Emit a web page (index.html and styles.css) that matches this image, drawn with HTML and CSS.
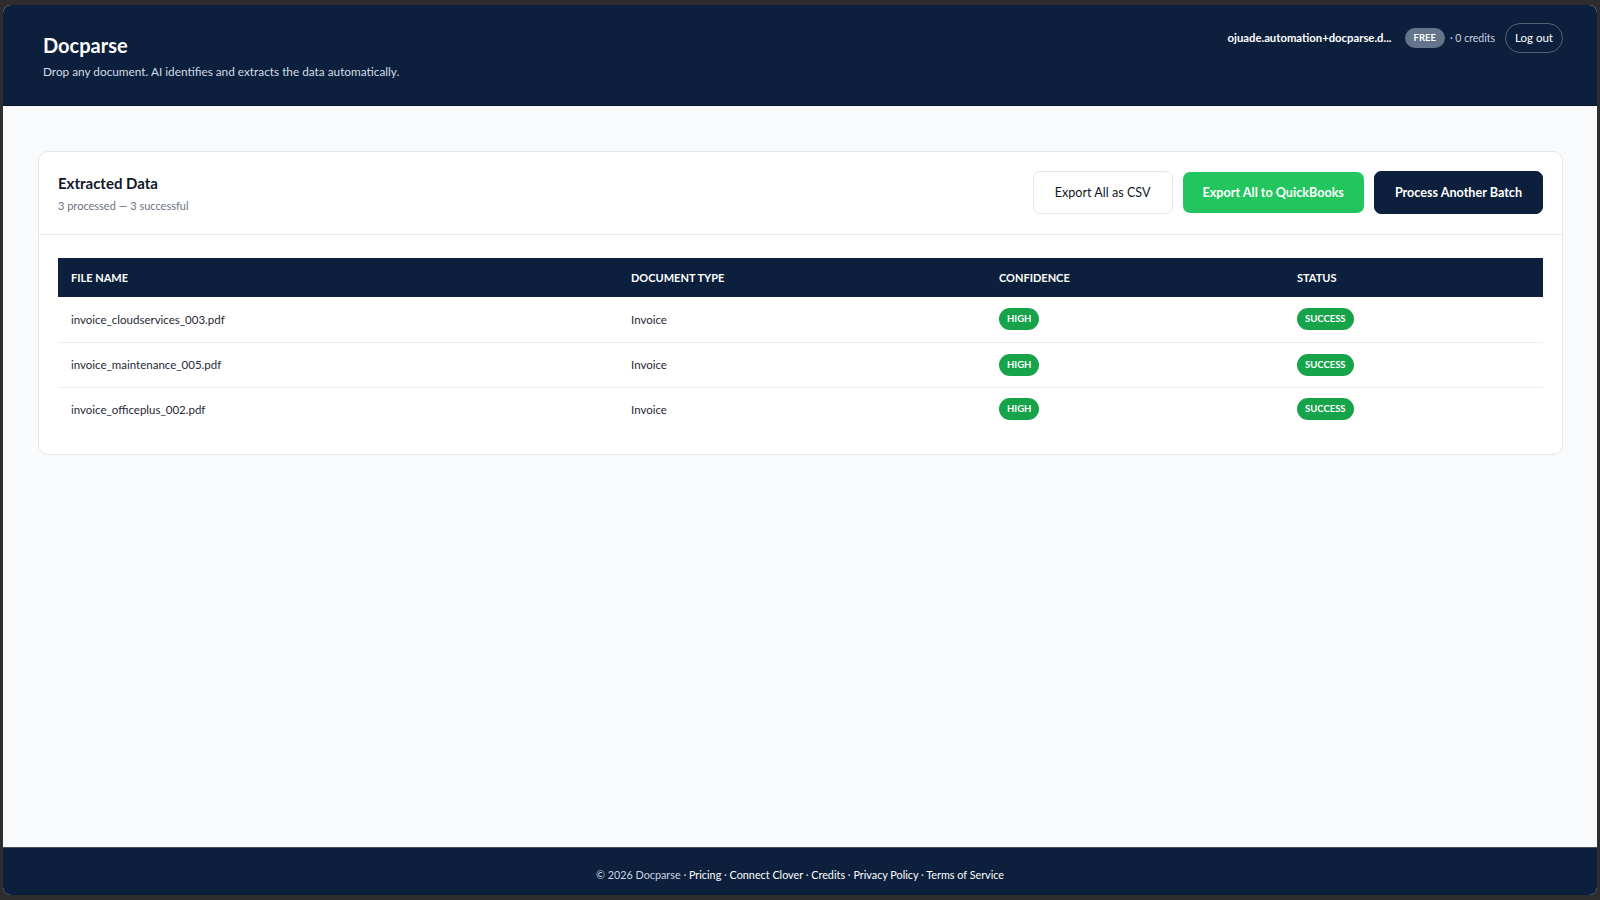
FILE: index.html
```html
<!DOCTYPE html>
<html lang="en">
<head>
<meta charset="utf-8">
<title>Docparse</title>
<link rel="stylesheet" href="styles.css">
</head>
<body>
<div class="window">
  <header class="topbar">
    <div class="brand">
      <h1 class="brand-title">Docparse</h1>
      <p class="brand-sub">Drop any document. AI identifies and extracts the data automatically.</p>
    </div>
    <div class="account">
      <span class="account-email">ojuade.automation+docparse.d...</span>
      <span class="plan-badge">FREE</span>
      <span class="credits">· 0 credits</span>
      <button class="btn-logout">Log out</button>
    </div>
  </header>

  <main class="content">
    <section class="card">
      <div class="card-head">
        <div class="card-titles">
          <h2 class="card-title">Extracted Data</h2>
          <p class="card-sub">3 processed — 3 successful</p>
        </div>
        <div class="actions">
          <button class="btn btn-outline">Export All as CSV</button>
          <button class="btn btn-green">Export All to QuickBooks</button>
          <button class="btn btn-dark">Process Another Batch</button>
        </div>
      </div>
      <div class="card-body">
        <table class="results">
          <thead>
            <tr>
              <th class="col-file">File Name</th>
              <th class="col-type">Document Type</th>
              <th class="col-conf">Confidence</th>
              <th class="col-status">Status</th>
            </tr>
          </thead>
          <tbody>
            <tr>
              <td>invoice_cloudservices_003.pdf</td>
              <td>Invoice</td>
              <td><span class="pill">HIGH</span></td>
              <td><span class="pill">SUCCESS</span></td>
            </tr>
            <tr>
              <td>invoice_maintenance_005.pdf</td>
              <td>Invoice</td>
              <td><span class="pill">HIGH</span></td>
              <td><span class="pill">SUCCESS</span></td>
            </tr>
            <tr>
              <td>invoice_officeplus_002.pdf</td>
              <td>Invoice</td>
              <td><span class="pill">HIGH</span></td>
              <td><span class="pill">SUCCESS</span></td>
            </tr>
          </tbody>
        </table>
      </div>
    </section>
  </main>

  <footer class="footer">
    <span class="footer-muted">© 2026 Docparse ·</span>
    <a href="#">Pricing</a> ·
    <a href="#">Connect Clover</a> ·
    <a href="#">Credits</a> ·
    <a href="#">Privacy Policy</a> ·
    <a href="#">Terms of Service</a>
  </footer>
</div>
</body>
</html>
```

FILE: styles.css
```css
* { box-sizing: border-box; }

html, body {
  margin: 0;
  padding: 0;
  height: 100%;
}

body {
  background: #2d2d2d;
  font-family: "Lato", "Liberation Sans", sans-serif;
  color: #0f172a;
  overflow: hidden;
}

.window {
  margin: 5px 3px 5px 3px;
  height: 890px;
  border-radius: 8px;
  overflow: hidden;
  display: flex;
  flex-direction: column;
  background: #f8fafc;
}

/* Header */
.topbar {
  height: 101px;
  flex: none;
  background: #0c1f3c;
  display: flex;
  justify-content: space-between;
  align-items: flex-start;
  padding: 18px 34px 0 40px;
  border-bottom: 1px solid #07152b;
}

.brand { margin-top: 8px; }

.brand-title {
  margin: 0;
  font-size: 20px;
  line-height: 28px;
  font-weight: 700;
  color: #ffffff;
}

.brand-sub {
  margin: 4px 0 0;
  font-size: 11.8px;
  line-height: 18px;
  color: #d5dce6;
}

.account {
  display: flex;
  align-items: center;
  height: 29px;
  color: #ffffff;
}

.account-email {
  font-size: 11.3px;
  font-weight: 700;
  margin-right: 13px;
}

.plan-badge {
  background: #64748b;
  color: #ffffff;
  font-size: 9.5px;
  font-weight: 700;
  height: 20px;
  line-height: 20px;
  padding: 0 9px;
  border-radius: 10px;
}

.credits {
  font-size: 10.5px;
  color: #cbd5e1;
  margin-left: 5px;
  margin-right: 10px;
}

.btn-logout {
  font-family: inherit;
  font-size: 11.5px;
  color: #ffffff;
  background: transparent;
  border: 1px solid rgba(255, 255, 255, 0.3);
  border-radius: 15px;
  height: 30px;
  padding: 0 9px;
  cursor: pointer;
}

/* Content */
.content {
  flex: 1;
  padding: 45px 34px 0 35px;
}

.card {
  background: #ffffff;
  border: 1px solid #e5e7eb;
  border-radius: 10px;
}

.card-head {
  display: flex;
  justify-content: space-between;
  align-items: center;
  padding: 18px 19px 20px 19px;
  border-bottom: 1px solid #e5e7eb;
}

.card-title {
  margin: 2px 0 0;
  font-size: 15px;
  line-height: 22px;
  font-weight: 700;
  color: #0f172a;
}

.card-sub {
  margin: 3px 0 0;
  font-size: 11px;
  line-height: 17px;
  color: #6b7280;
}

.actions {
  display: flex;
  align-items: center;
  gap: 10px;
}

.btn {
  font-family: inherit;
  font-size: 12.6px;
  font-weight: 700;
  height: 43px;
  padding: 0 20px;
  border-radius: 7px;
  cursor: pointer;
}

.btn-outline {
  background: #ffffff;
  color: #111827;
  border: 1px solid #e5e7eb;
  font-weight: 400;
  padding: 0 21px;
}

.btn-green {
  background: #22c55e;
  color: #ffffff;
  border: 0;
  height: 41px;
}

.btn-dark {
  background: #0c1f3c;
  color: #ffffff;
  border: 1px solid #0c1f3c;
}

.card-body {
  padding: 23px 19px 23px;
}

.results {
  width: 100%;
  border-collapse: collapse;
  table-layout: fixed;
}

.results th {
  background: #0c1f3c;
  color: #ffffff;
  text-align: left;
  text-transform: uppercase;
  font-size: 11px;
  font-weight: 700;
  height: 39px;
  padding: 0 13px;
}

.col-file { width: 560px; }
.col-type { width: 368px; }
.col-conf { width: 298px; }
.col-status { width: auto; }

.results td {
  height: 45px;
  padding: 0 13px;
  font-size: 11.5px;
  color: #1f2937;
  border-bottom: 1px solid #eceef2;
}

.results tbody tr:last-child td {
  border-bottom: 0;
  height: 44px;
}

.pill {
  display: inline-block;
  background: #16a34a;
  color: #ffffff;
  font-size: 9.5px;
  font-weight: 700;
  height: 22px;
  line-height: 22px;
  padding: 0 8px;
  border-radius: 11px;
  vertical-align: middle;
}

/* Footer */
.footer {
  flex: none;
  height: 48px;
  background: #0c1f3c;
  border-top: 1px solid #4a4f58;
  text-align: center;
  padding-top: 18px;
  font-size: 10.8px;
  line-height: 18px;
  color: #cbd5e1;
}

.footer-muted { color: #cbd5e1; }

.footer a {
  color: #ffffff;
  text-decoration: none;
}
```
